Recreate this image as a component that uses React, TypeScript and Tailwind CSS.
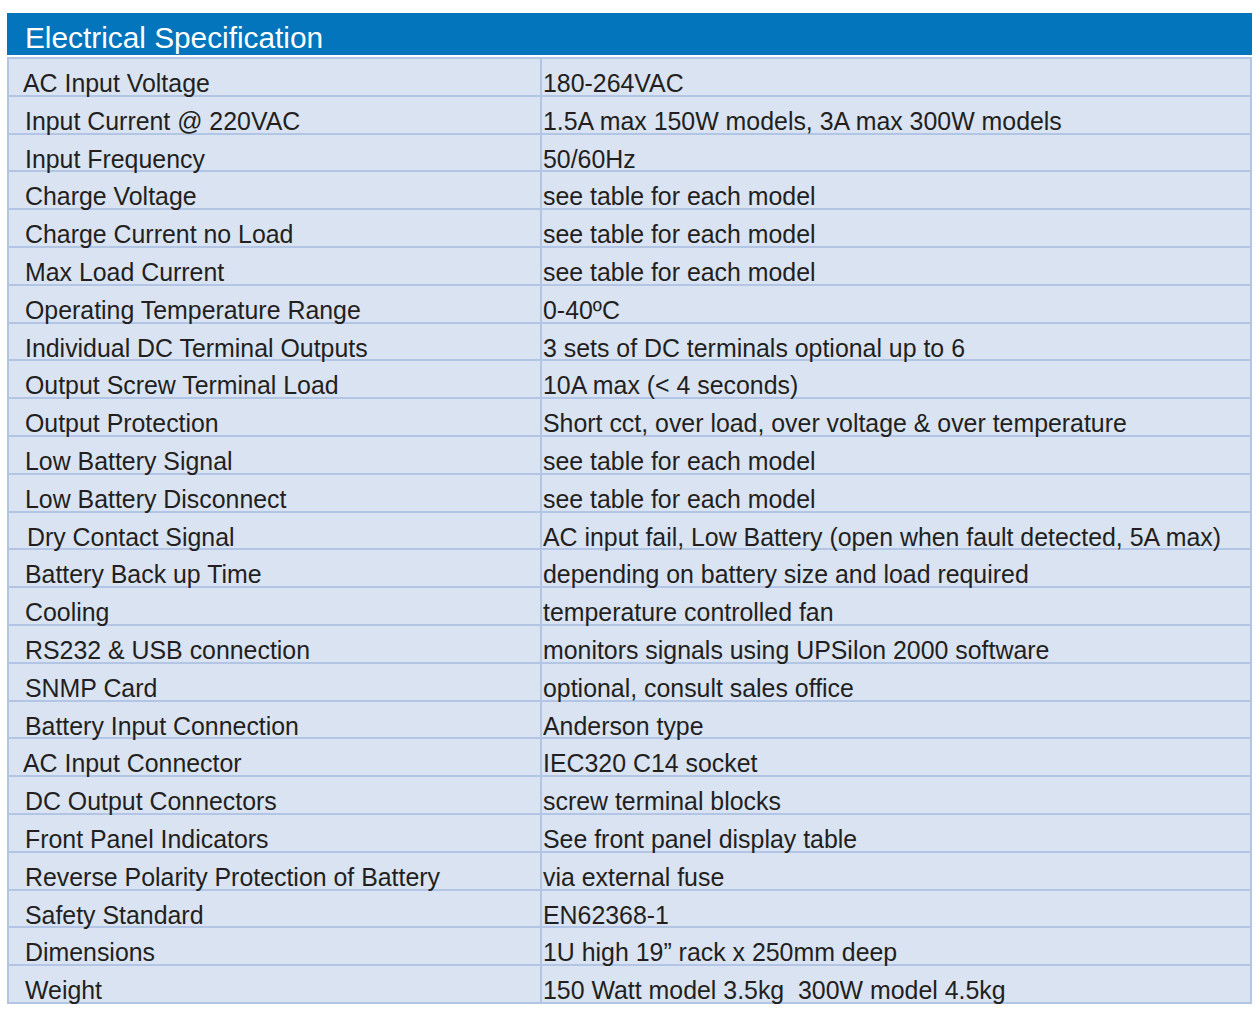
const ROWS: Array<[string, string, number?]> = [
  ["AC Input Voltage", "180-264VAC", -2],
  ["Input Current @ 220VAC", "1.5A max 150W models, 3A max 300W models"],
  ["Input Frequency", "50/60Hz"],
  ["Charge Voltage", "see table for each model"],
  ["Charge Current no Load", "see table for each model"],
  ["Max Load Current", "see table for each model"],
  ["Operating Temperature Range", "0-40ºC"],
  ["Individual DC Terminal Outputs", "3 sets of DC terminals optional up to 6"],
  ["Output Screw Terminal Load", "10A max (< 4 seconds)"],
  ["Output Protection", "Short cct, over load, over voltage & over temperature"],
  ["Low Battery Signal", "see table for each model"],
  ["Low Battery Disconnect", "see table for each model"],
  ["Dry Contact Signal", "AC input fail, Low Battery (open when fault detected, 5A max)", 2],
  ["Battery Back up Time", "depending on battery size and load required"],
  ["Cooling", "temperature controlled fan"],
  ["RS232 & USB connection", "monitors signals using UPSilon 2000 software"],
  ["SNMP Card", "optional, consult sales office"],
  ["Battery Input Connection", "Anderson type"],
  ["AC Input Connector", "IEC320 C14 socket", -2],
  ["DC Output Connectors", "screw terminal blocks"],
  ["Front Panel Indicators", "See front panel display table"],
  ["Reverse Polarity Protection of Battery", "via external fuse"],
  ["Safety Standard", "EN62368-1"],
  ["Dimensions", "1U high 19\u201d rack x 250mm deep"],
  ["Weight", "150 Watt model 3.5kg  300W model 4.5kg"],
];

export default function App() {
  return (
    <div className="w-[1260px] h-[1014px] bg-white pt-[13px] pl-[7px] font-['Liberation_Sans',Arial,sans-serif] text-[#231f20]">
      <div className="w-[1245px] h-[42px] bg-[#0275bd] pl-[18px] pt-[10px] text-white text-[29.8px] leading-[30px]">
        Electrical Specification
      </div>
      <div className="mt-[2px] w-[1245px] border-2 border-b-0 border-[#b3c5e4] bg-[#d9e3f2]">
        {ROWS.map(([label, value, shift]) => (
          <div
            key={label}
            className="grid grid-cols-[533px_1fr] h-[37.8px] border-b-2 border-[#b3c5e4] text-[24.9px] leading-[24px]"
          >
            <div className="border-r-2 border-[#b3c5e4] pt-[12px] pl-[16px]">
              <span className="relative" style={{ left: shift ?? 0 }}>
                {label}
              </span>
            </div>
            <div className="pt-[12px] pl-[1px] whitespace-pre">{value}</div>
          </div>
        ))}
      </div>
    </div>
  );
}
